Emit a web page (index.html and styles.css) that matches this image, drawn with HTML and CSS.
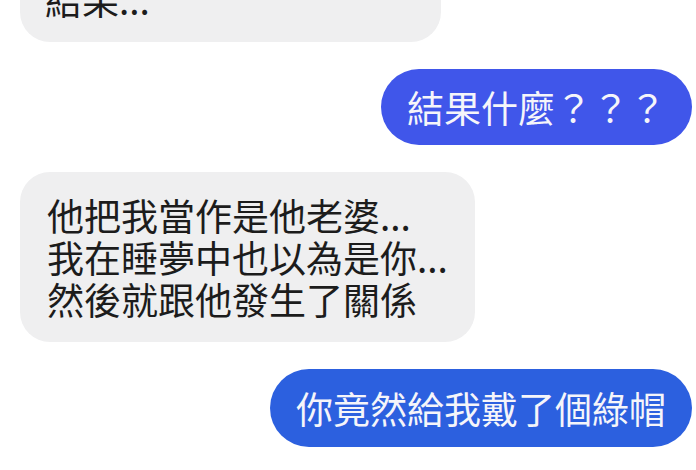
FILE: index.html
```html
<!DOCTYPE html>
<html lang="zh-Hant">
<head>
    <meta charset="UTF-8">
    <meta name="viewport" content="width=device-width, initial-scale=1.0">
    <title>Chat</title>
    <link rel="stylesheet" href="styles.css">
</head>
<body>
<div class="chat">
    <div class="msg in first">結果...</div>
    <div class="msg out">結果什麼？？？</div>
    <div class="msg in">他把我當作是他老婆...<br>我在睡夢中也以為是你...<br>然後就跟他發生了關係</div>
    <div class="msg out alt">你竟然給我戴了個綠帽</div>
</div>
</body>
</html>
```

FILE: styles.css
```css
body {
    margin: 0;
    background: #fff;
    font-family: "Noto Sans CJK TC", "Noto Sans", sans-serif;
}

.chat {
    display: flex;
    flex-direction: column;
    gap: 27px;
    padding: 0 4px 0 20px;
}

.msg {
    font-size: 37px;
    line-height: 42px;
    border-radius: 30px;
    white-space: nowrap;
}

.msg.in {
    align-self: flex-start;
    background: #efeff0;
    color: #1c1c1c;
    padding: 22px 27px;
}

.msg.first {
    margin-top: -44px;
    width: 369px;
    padding-left: 25px;
}

.msg.out {
    align-self: flex-end;
    background: #4056ea;
    color: #f5f5fa;
    padding: 17px 26px;
    border-radius: 40px;
}

.msg.out.alt {
    background: #2c60df;
    padding: 18px 26px;
}
```
